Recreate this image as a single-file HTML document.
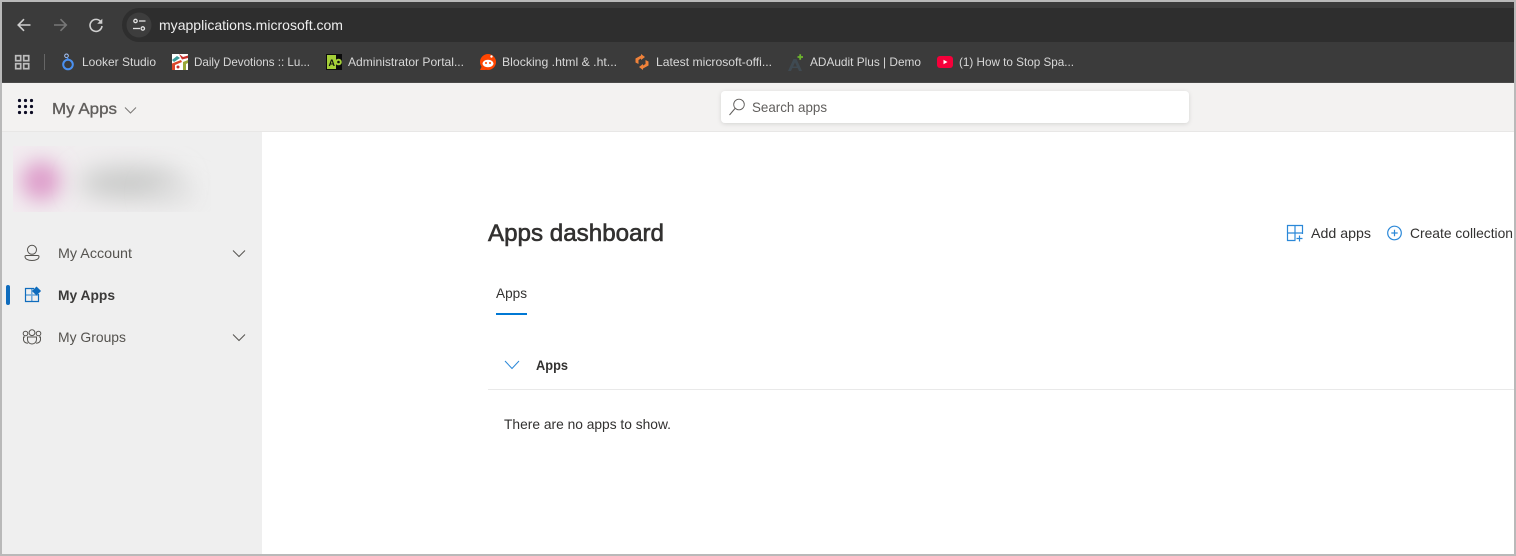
<!DOCTYPE html>
<html lang="en">
<head>
<meta charset="utf-8">
<title>My Apps</title>
<style>
html,body{margin:0;padding:0;background:#fff;width:1516px;height:556px;overflow:hidden}
svg{display:block}
text{font-family:"Liberation Sans",Arial,sans-serif}
.bm{font-size:12px;fill:#d8d8d8}
.side{font-size:14px;fill:#55534f}
.main{font-size:14px;fill:#323130}
</style>
</head>
<body>
<svg width="1516" height="556" viewBox="0 0 1516 556" xmlns="http://www.w3.org/2000/svg">
<defs>
<filter id="b1" x="-150%" y="-150%" width="400%" height="400%"><feGaussianBlur stdDeviation="10"/></filter>
<filter id="b2" x="-60%" y="-200%" width="220%" height="500%"><feGaussianBlur stdDeviation="13"/></filter>
<filter id="sh" x="-5%" y="-30%" width="110%" height="170%"><feDropShadow dx="0" dy="1" stdDeviation="2" flood-color="#000" flood-opacity=".13"/></filter>
<clipPath id="cb"><rect x="13" y="146" width="198" height="66"/></clipPath>
<linearGradient id="pf" x1="0" x2="1" y1="0" y2="0">
<stop offset="0" stop-color="#f2ecf0"/><stop offset=".4" stop-color="#f0eeef"/><stop offset="1" stop-color="#efefef"/>
</linearGradient>
</defs>

<rect width="1516" height="556" fill="#fff"/>
<!-- Sidebar -->
<rect x="2" y="132" width="260" height="422" fill="#efefef"/>
<!-- Header -->
<rect x="2" y="83" width="1512" height="48" fill="#f3f2f1"/>
<rect x="2" y="131" width="1512" height="1" fill="#e8e7e6"/>
<!-- Chrome -->
<rect x="2" y="2" width="1512" height="81" fill="#3b3b3b"/>
<rect x="2" y="82" width="1512" height="1" fill="#4a4a4a"/>
<path d="M139 8H1514V42H139A17 17 0 0 1 139 8Z" fill="#2e2e2e"/>
<circle cx="139" cy="25" r="12.500" fill="#3d3d3d"/>

<!-- Nav buttons -->
<g fill="none" stroke-width="1.600">
<path d="M30.500 25H18.500M24 19.200L18.200 25L24 30.800" stroke="#cfcfcf"/>
<path d="M54 25H66M60.500 19.200L66.300 25L60.500 30.800" stroke="#777"/>
<path d="M101 22A6 6 0 1 0 102 26" stroke="#cfcfcf"/>
</g>
<path d="M102.300 18.700V23.800H97.200Z" fill="#cfcfcf"/>
<!-- Site settings -->
<g fill="none" stroke="#e2e2e2" stroke-width="1.300">
<circle cx="135.500" cy="21" r="1.700"/><path d="M139 21H145.500"/>
<circle cx="142.800" cy="28.500" r="1.700"/><path d="M133 28.500H140"/>
</g>
<text x="159" y="30" font-size="14" fill="#eee" textLength="184" lengthAdjust="spacingAndGlyphs">myapplications.microsoft.com</text>

<!-- Bookmarks bar -->
<g fill="none" stroke="#bdbdbd" stroke-width="1.700">
<rect x="15.700" y="55.700" width="5" height="5"/><rect x="23.700" y="55.700" width="5" height="5"/>
<rect x="15.700" y="63.700" width="5" height="5"/><rect x="23.700" y="63.700" width="5" height="5"/>
</g>
<rect x="44" y="54" width="1" height="16" fill="#666"/>

<!-- Looker -->
<circle cx="68" cy="64.500" r="4.800" fill="none" stroke="#4a90f0" stroke-width="2"/>
<circle cx="66.500" cy="55.800" r="1.800" fill="none" stroke="#a8c7fa" stroke-width="1"/>
<path d="M67 57.500L68.500 59.500" stroke="#4a90f0" stroke-width="1.200"/>
<text class="bm" x="82" y="66" textLength="74" lengthAdjust="spacingAndGlyphs">Looker Studio</text>

<!-- Daily Devotions -->
<rect x="172" y="54" width="16" height="16" fill="#fff"/>
<path d="M172 60L177 56L180 58L174 62Z" fill="#3b9a9a"/>
<path d="M179 54L183 57L188 55.500V58L182 59.500Z" fill="#c9302c"/>
<path d="M172 63.500L181 60L182 62L175 65V70H172Z" fill="#d9472b"/>
<path d="M183 62L188 60V63L186 64V70H183Z" fill="#9aa93a"/>
<circle cx="178" cy="67" r="1.500" fill="#c9302c"/>
<text class="bm" x="194" y="66" textLength="116" lengthAdjust="spacingAndGlyphs">Daily Devotions :: Lu...</text>

<!-- Admin portal -->
<rect x="326" y="54" width="16" height="16" fill="#0c0c0c"/>
<rect x="327" y="55" width="9" height="14" fill="#a4cf38"/>
<text x="328.500" y="66" font-size="9" font-weight="700" fill="#111">A</text>
<circle cx="338.500" cy="62" r="2.300" fill="none" stroke="#a4cf38" stroke-width="2"/>
<text class="bm" x="348" y="66" textLength="116" lengthAdjust="spacingAndGlyphs">Administrator Portal...</text>

<!-- Reddit -->
<circle cx="488" cy="62" r="8" fill="#ff4500"/>
<path d="M480 70H486L482 66Z" fill="#ff4500"/>
<ellipse cx="488" cy="63.500" rx="5.500" ry="3.800" fill="#fff"/>
<circle cx="486" cy="63" r="1" fill="#ff4500"/><circle cx="490" cy="63" r="1" fill="#ff4500"/>
<circle cx="491.500" cy="56.500" r="1.200" fill="#fff"/>
<text class="bm" x="502" y="66" textLength="115" lengthAdjust="spacingAndGlyphs">Blocking .html &amp; .ht...</text>

<!-- Latest microsoft -->
<path d="M641 54L645 57L641 60V58.500L638.500 60V64L635.500 62.500V58.500L641 55.500Z" fill="#f0823a"/>
<path d="M643 70L639 67L643 64V65.500L645.500 64V60L648.500 61.500V65.500L643 68.500Z" fill="#f0823a"/>
<text class="bm" x="656" y="66" textLength="116" lengthAdjust="spacingAndGlyphs">Latest microsoft-offi...</text>

<!-- ADAudit -->
<path d="M788 71L793.500 59H796.500L802 71H799L795 62.500L791 71Z" fill="#3f4a52"/>
<path d="M792 66.500H798V68H792Z" fill="#3f4a52"/>
<path d="M797.500 57H803M800.200 54.200V59.800" stroke="#6db52e" stroke-width="1.800"/>
<text class="bm" x="810" y="66" textLength="111" lengthAdjust="spacingAndGlyphs">ADAudit Plus | Demo</text>

<!-- YouTube -->
<rect x="937" y="56" width="16" height="12" rx="3" fill="#f5003a"/>
<path d="M943.500 59.800L947.500 62L943.500 64.200Z" fill="#fff"/>
<text class="bm" x="959" y="66" textLength="115" lengthAdjust="spacingAndGlyphs">(1) How to Stop Spa...</text>

<!-- Header: waffle -->
<g fill="#0c0c24">
<circle cx="19.500" cy="100.500" r="1.600"/><circle cx="25.500" cy="100.500" r="1.600"/><circle cx="31.500" cy="100.500" r="1.600"/>
<circle cx="19.500" cy="106.500" r="1.600"/><circle cx="25.500" cy="106.500" r="1.600"/><circle cx="31.500" cy="106.500" r="1.600"/>
<circle cx="19.500" cy="112.500" r="1.600"/><circle cx="25.500" cy="112.500" r="1.600"/><circle cx="31.500" cy="112.500" r="1.600"/>
</g>
<text x="52" y="114" font-size="16" fill="#605e5c" stroke="#605e5c" stroke-width=".35" textLength="65" lengthAdjust="spacingAndGlyphs">My Apps</text>
<path d="M125 107.500L130.500 113L136 107.500" fill="none" stroke="#7a7876" stroke-width="1"/>

<!-- Search -->
<rect x="721" y="91" width="468" height="32" rx="4" fill="#fff" filter="url(#sh)"/>
<circle cx="739" cy="104.500" r="5.300" fill="none" stroke="#605e5c" stroke-width=".9"/>
<path d="M735 108.500L729.500 115" stroke="#605e5c" stroke-width="1"/>
<text x="752" y="112" font-size="14" fill="#605e5c" textLength="75" lengthAdjust="spacingAndGlyphs">Search apps</text>

<!-- Blurred profile -->
<g clip-path="url(#cb)">
<rect x="13" y="146" width="198" height="66" fill="url(#pf)"/>
<circle cx="41" cy="181" r="20" fill="#de9ecb" filter="url(#b1)"/>
<ellipse cx="130" cy="183" rx="52" ry="15" fill="#c6c7c6" filter="url(#b2)"/>
<ellipse cx="175" cy="193" rx="24" ry="8" fill="#dedede" filter="url(#b2)"/>
</g>

<!-- Side nav -->
<g fill="none" stroke="#55534f" stroke-width="1">
<circle cx="32" cy="249.800" r="4.500"/>
<path d="M25 256.500Q25 255.500 26.500 255.500H37.500Q39 255.500 39 256.500C39 259 36 260.500 32 260.500C28 260.500 25 259 25 256.500Z"/>
<path d="M233 250.500L239 256.500L245 250.500"/>
<path d="M233 334.500L239 340.500L245 334.500"/>
<circle cx="32" cy="332.700" r="2.900"/>
<circle cx="25.500" cy="333.500" r="2.300"/>
<circle cx="38.500" cy="333.500" r="2.300"/>
<path d="M27.500 337H36.500V339.500A4.500 4.500 0 0 1 27.500 339.500Z"/>
<path d="M25 337H23.500V339.500A3.700 3.700 0 0 0 28 343"/>
<path d="M39 337H40.500V339.500A3.700 3.700 0 0 1 36 343"/>
</g>
<rect x="6" y="285" width="4" height="20" rx="2" fill="#0f6cbd"/>
<path d="M25.500 295H38.500M31.800 288.500V301.500" stroke="#6aa7da" stroke-width="1.500" fill="none"/>
<path d="M34 288.500H25.500V301.500H38.500V294" fill="none" stroke="#0f6cbd" stroke-width="1.200"/>
<path d="M36.500 287.500L40 291L36.500 294.500L33 291Z" fill="#0f6cbd" stroke="#0f6cbd" stroke-width="1.500"/>
<text class="side" x="58" y="258" textLength="74" lengthAdjust="spacingAndGlyphs">My Account</text>
<text x="58" y="300" font-size="14" font-weight="700" fill="#3b3a39" textLength="57" lengthAdjust="spacingAndGlyphs">My Apps</text>
<text class="side" x="58" y="342" textLength="68" lengthAdjust="spacingAndGlyphs">My Groups</text>

<!-- Main -->
<text x="488" y="241" font-size="24" fill="#323130" stroke="#323130" stroke-width=".6" textLength="176" lengthAdjust="spacingAndGlyphs">Apps dashboard</text>

<g fill="none" stroke="#2b88d8" stroke-width="1.200">
<path d="M1302.500 234V225.500H1287.500V240.500H1295.500"/>
<path d="M1295 225.500V240.500M1287.500 233H1302.500"/>
<path d="M1296.500 238.500H1302.500M1299.500 235.500V241.500"/>
<circle cx="1394.500" cy="233" r="6.800"/>
<path d="M1394.500 229.800V236.200M1391.300 233H1397.700"/>
</g>
<text class="main" x="1311" y="238" textLength="60" lengthAdjust="spacingAndGlyphs">Add apps</text>
<text class="main" x="1410" y="238" textLength="103" lengthAdjust="spacingAndGlyphs">Create collection</text>

<text class="main" x="496" y="298" textLength="31" lengthAdjust="spacingAndGlyphs">Apps</text>
<rect x="496" y="313" width="31" height="2" fill="#0078d4"/>

<path d="M505 361L512 368.500L519 361" fill="none" stroke="#2b88d8" stroke-width="1"/>
<text x="536" y="370" font-size="14" font-weight="700" fill="#323130" textLength="32" lengthAdjust="spacingAndGlyphs">Apps</text>
<rect x="488" y="389" width="1026" height="1" fill="#e9e9e9"/>
<text class="main" x="504" y="429" textLength="167" lengthAdjust="spacingAndGlyphs">There are no apps to show.</text>

<!-- Outer window border -->
<rect x="1" y="1" width="1514" height="554" fill="none" stroke="#b9b9b9" stroke-width="2"/>
</svg>
</body>
</html>
